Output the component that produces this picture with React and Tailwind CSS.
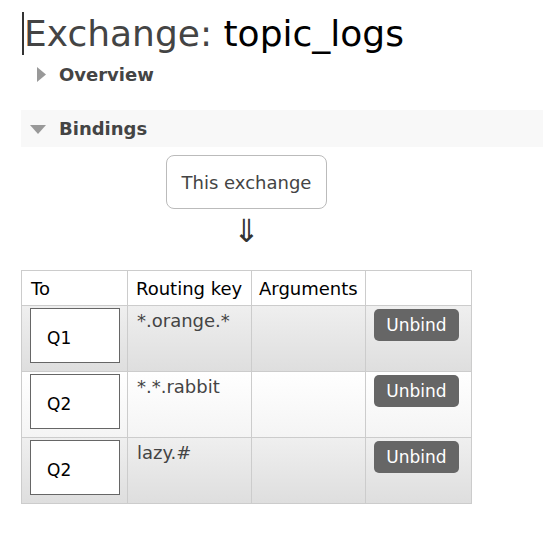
const rows = [
  { to: 'Q1', key: '*.orange.*', odd: true },
  { to: 'Q2', key: '*.*.rabbit', odd: false },
  { to: 'Q2', key: 'lazy.#', odd: true },
];

function Row({ to, routingKey, odd }) {
  const bg = odd
    ? 'bg-gradient-to-b from-[#efefef] to-[#dedede]'
    : 'bg-gradient-to-b from-[#ffffff] to-[#f4f4f4]';
  return (
    <tr className={`${bg} h-[66px]`}>
      <td className="border border-[#cccccc] align-top pl-[8px] pr-[7px] pt-[2px]">
        <div className="h-[55px] w-[90px] border border-[#666666] bg-white flex items-center pl-[16px] pt-[6px] text-[17px] text-black">
          {to}
        </div>
      </td>
      <td className="border border-[#cccccc] align-top px-[9px] pt-[4px] text-[#444444] leading-[22px] whitespace-nowrap">{routingKey}</td>
      <td className="border border-[#cccccc]"></td>
      <td className="border border-[#cccccc] align-top pl-[8px] pt-[3px]">
        <button className="h-[32px] w-[85px] rounded-[5px] bg-[#666666] text-white text-[17px] leading-none">Unbind</button>
      </td>
    </tr>
  );
}

export default function App() {
  return (
    <div className="min-h-[535px] bg-white pl-[21px] text-[18px] font-['DejaVu_Sans',sans-serif]">
      <h1 className="ml-[1px] mt-[12px] border-l-[2px] border-[#333333] text-[36px] leading-[43px]">
        <span className="text-[#444444]">Exchange:</span> <span className="text-black">topic_logs</span>
      </h1>

      <div className="mt-[8px] flex h-[22px] items-center pl-[16px]">
        <svg width="9" height="15" viewBox="0 0 9 15" className="mr-[13px]">
          <polygon points="0,0 9,7.5 0,15" fill="#999999" />
        </svg>
        <span className="font-bold text-[#444444]">Overview</span>
      </div>

      <div className="mt-[25px] flex h-[37px] items-center bg-[#f8f8f8] pl-[9px]">
        <svg width="16" height="9" viewBox="0 0 16 9" className="mr-[13px] mt-[2px]">
          <polygon points="0,0 16,0 8,9" fill="#999999" />
        </svg>
        <span className="font-bold text-[#444444]">Bindings</span>
      </div>

      <div className="mt-[8px] ml-[145px] flex h-[54px] w-[161px] items-center justify-center rounded-[8px] border border-[#bbbbbb] text-[#444444]">
        This exchange
      </div>
      <div className="ml-[145px] w-[161px] text-center text-[32px] leading-[44px] text-[#333333]">⇓</div>

      <table className="mt-[17px] w-[450px] table-fixed border-collapse text-left">
        <colgroup>
          <col className="w-[106px]" />
          <col className="w-[124px]" />
          <col className="w-[114px]" />
          <col className="w-[106px]" />
        </colgroup>
        <thead>
          <tr className="h-[35px] bg-white">
            <th className="border border-[#cccccc] px-[9px] font-normal text-black">To</th>
            <th className="border border-[#cccccc] px-[8px] font-normal text-black whitespace-nowrap">Routing key</th>
            <th className="border border-[#cccccc] px-[7px] font-normal text-black">Arguments</th>
            <th className="border border-[#cccccc]"></th>
          </tr>
        </thead>
        <tbody>
          {rows.map((r, i) => (
            <Row key={i} to={r.to} routingKey={r.key} odd={r.odd} />
          ))}
        </tbody>
      </table>
    </div>
  );
}
